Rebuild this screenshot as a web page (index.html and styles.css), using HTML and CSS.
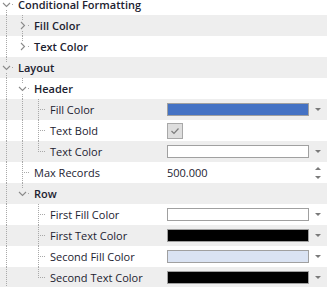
FILE: index.html
```html
<!DOCTYPE html>
<html>
<head>
<meta charset="utf-8">
<link rel="stylesheet" href="styles.css">
</head>
<body>
<div class="grid">
  <div class="row">
    <div class="tree"><span class="g tee"><svg class="chev" viewBox="0 0 9 9"><polyline points="1,3 4.5,6.5 8,3"/></svg></span><span class="label b">Conditional Formatting</span></div>
    <div class="val"></div>
  </div>
  <div class="row alt">
    <div class="tree"><span class="g pipe"></span><span class="g tee"><svg class="chev" viewBox="0 0 9 9"><polyline points="3,1 6.5,4.5 3,8"/></svg></span><span class="label b">Fill Color</span></div>
    <div class="val"></div>
  </div>
  <div class="row">
    <div class="tree"><span class="g pipe"></span><span class="g elbow"><svg class="chev" viewBox="0 0 9 9"><polyline points="3,1 6.5,4.5 3,8"/></svg></span><span class="label b">Text Color</span></div>
    <div class="val"></div>
  </div>
  <div class="row alt">
    <div class="tree"><span class="g tee"><svg class="chev" viewBox="0 0 9 9"><polyline points="1,3 4.5,6.5 8,3"/></svg></span><span class="label b">Layout</span></div>
    <div class="val"></div>
  </div>
  <div class="row">
    <div class="tree"><span class="g pipe"></span><span class="g tee"><svg class="chev" viewBox="0 0 9 9"><polyline points="1,3 4.5,6.5 8,3"/></svg></span><span class="label b">Header</span></div>
    <div class="val"></div>
  </div>
  <div class="row alt">
    <div class="tree"><span class="g pipe"></span><span class="g pipe"></span><span class="g tee"></span><span class="label">Fill Color</span></div>
    <div class="val"><span class="swatch blue"></span><span class="drop"></span></div>
  </div>
  <div class="row">
    <div class="tree"><span class="g pipe"></span><span class="g pipe"></span><span class="g tee"></span><span class="label">Text Bold</span></div>
    <div class="val"><span class="check"><svg viewBox="0 0 14 14"><polyline points="3.5,7 6,9.5 10.5,4.5"/></svg></span></div>
  </div>
  <div class="row alt">
    <div class="tree"><span class="g pipe"></span><span class="g pipe"></span><span class="g elbow"></span><span class="label">Text Color</span></div>
    <div class="val"><span class="swatch white"></span><span class="drop"></span></div>
  </div>
  <div class="row">
    <div class="tree"><span class="g pipe"></span><span class="g tee"></span><span class="label">Max Records</span></div>
    <div class="val"><span class="num">500.000</span><span class="spin"><i class="up"></i><i class="down"></i></span></div>
  </div>
  <div class="row alt">
    <div class="tree"><span class="g pipe"></span><span class="g elbow"><svg class="chev" viewBox="0 0 9 9"><polyline points="1,3 4.5,6.5 8,3"/></svg></span><span class="label b">Row</span></div>
    <div class="val"></div>
  </div>
  <div class="row">
    <div class="tree"><span class="g pipe"></span><span class="g"></span><span class="g tee"></span><span class="label">First Fill Color</span></div>
    <div class="val"><span class="swatch white"></span><span class="drop"></span></div>
  </div>
  <div class="row alt">
    <div class="tree"><span class="g pipe"></span><span class="g"></span><span class="g tee"></span><span class="label">First Text Color</span></div>
    <div class="val"><span class="swatch black"></span><span class="drop"></span></div>
  </div>
  <div class="row">
    <div class="tree"><span class="g pipe"></span><span class="g"></span><span class="g tee"></span><span class="label">Second Fill Color</span></div>
    <div class="val"><span class="swatch light"></span><span class="drop"></span></div>
  </div>
  <div class="row alt">
    <div class="tree"><span class="g pipe"></span><span class="g"></span><span class="g elbow"></span><span class="label">Second Text Color</span></div>
    <div class="val"><span class="swatch black"></span><span class="drop"></span></div>
  </div>
</div>
</body>
</html>
```

FILE: styles.css
```css
html, body {
  margin: 0;
  padding: 0;
  background: #ffffff;
  overflow: hidden;
}
body {
  font-family: "Open Sans", "Noto Sans", sans-serif;
  font-size: 11px;
  color: #1c2230;
}
.grid {
  margin-top: -6px;
  --dot: #a8a8a8;
}
.row {
  --bg: #ffffff;
  display: grid;
  grid-template-columns: 167px 1fr;
  height: 21px;
  background: var(--bg);
}
.row.alt {
  --bg: #eeeeee;
}
.tree {
  display: flex;
  align-items: center;
  margin-left: -2px;
  height: 21px;
  min-width: 0;
  white-space: nowrap;
}
.g {
  flex: none;
  width: 16px;
  height: 21px;
  display: flex;
  align-items: center;
  justify-content: center;
}
.pipe {
  background: repeating-linear-gradient(to bottom, var(--dot) 0 1px, transparent 1px 2px) 8px 0 / 1px 100% no-repeat;
}
.tee {
  background:
    repeating-linear-gradient(to bottom, var(--dot) 0 1px, transparent 1px 2px) 8px 0 / 1px 100% no-repeat,
    repeating-linear-gradient(to right, var(--dot) 0 1px, transparent 1px 2px) 10px 10px / 6px 1px no-repeat;
}
.elbow {
  background:
    repeating-linear-gradient(to bottom, var(--dot) 0 1px, transparent 1px 2px) 8px 0 / 1px 11px no-repeat,
    repeating-linear-gradient(to right, var(--dot) 0 1px, transparent 1px 2px) 10px 10px / 6px 1px no-repeat;
}
.chev {
  width: 9px;
  height: 9px;
  margin-left: 1px;
  background: var(--bg);
  fill: none;
  stroke: #8a8a8a;
  stroke-width: 1.1;
}
.label {
  padding-left: 4px;
  line-height: 21px;
}
.label.b {
  font-weight: 600;
}
.val {
  display: flex;
  align-items: center;
  height: 21px;
}
.swatch {
  flex: none;
  width: 142px;
  height: 13px;
  box-sizing: border-box;
  border: 1px solid #a0a0a0;
}
.swatch.blue { background: #4472c4; }
.swatch.white { background: #ffffff; }
.swatch.black { background: #000000; }
.swatch.light { background: #dae3f3; }
.drop {
  flex: 1;
  display: flex;
  justify-content: center;
  align-items: center;
  height: 21px;
}
.drop::before {
  content: "";
  width: 0;
  height: 0;
  border-left: 3px solid transparent;
  border-right: 3px solid transparent;
  border-top: 3px solid #7a7a7a;
}
.check {
  width: 16px;
  height: 16px;
  box-sizing: border-box;
  border: 1px solid #a8a8a8;
  background: #dedede;
  display: flex;
}
.check svg {
  width: 14px;
  height: 14px;
  fill: none;
  stroke: #7c7c7c;
  stroke-width: 1.2;
}
.num {
  flex: none;
  width: 142px;
}
.spin {
  flex: 1;
  display: flex;
  flex-direction: column;
  align-items: center;
  justify-content: center;
  gap: 6px;
  height: 21px;
}
.spin i {
  width: 0;
  height: 0;
  border-left: 3px solid transparent;
  border-right: 3px solid transparent;
}
.spin .up { border-bottom: 3px solid #7a7a7a; }
.spin .down { border-top: 3px solid #7a7a7a; }
```
